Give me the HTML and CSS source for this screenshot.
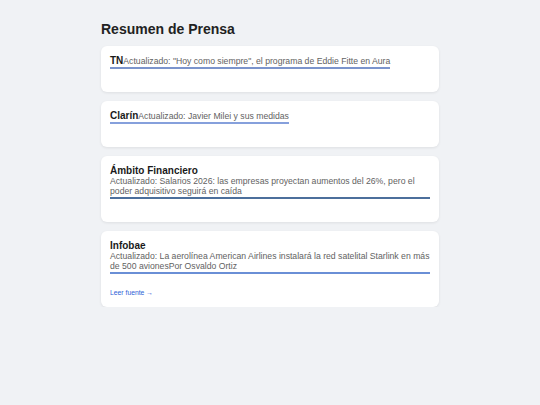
FILE: index.html
```html
<!DOCTYPE html>
<html lang="es">
<head>
<meta charset="utf-8">
<title>Resumen de Prensa</title>
<link rel="stylesheet" href="styles.css">
</head>
<body>
<main class="page">
  <h1 class="page-title">Resumen de Prensa</h1>
  <section class="news-list">
    <article class="card">
      <div class="headline headline--a">
        <h2 class="source">TN</h2>
        <p class="summary">Actualizado: "Hoy como siempre", el programa de Eddie Fitte en Aura</p>
      </div>
      <div class="card-footer"></div>
    </article>
    <article class="card">
      <div class="headline headline--b">
        <h2 class="source">Clarín</h2>
        <p class="summary">Actualizado: Javier Milei y sus medidas</p>
      </div>
      <div class="card-footer"></div>
    </article>
    <article class="card">
      <div class="headline headline--c">
        <h2 class="source">Ámbito Financiero</h2>
        <p class="summary">Actualizado: Salarios 2026: las empresas proyectan aumentos del 26%, pero el poder adquisitivo seguirá en caída</p>
      </div>
      <div class="card-footer"></div>
    </article>
    <article class="card">
      <div class="headline headline--d">
        <h2 class="source">Infobae</h2>
        <p class="summary">Actualizado: La aerolínea American Airlines instalará la red satelital Starlink en más de 500 avionesPor Osvaldo Ortiz</p>
      </div>
      <div class="card-footer">
        <a class="read-link" href="#">Leer fuente →</a>
      </div>
    </article>
  </section>
</main>
</body>
</html>
```

FILE: styles.css
```css
* { box-sizing: border-box; }

html, body {
  margin: 0;
  padding: 0;
  background: #f0f2f5;
  font-family: "Liberation Sans", Arial, sans-serif;
  color: #1c1c1c;
}

.page {
  width: 338px;
  margin: 0 auto;
  padding-top: 20px;
}

.page-title {
  margin: 0 0 8px 0;
  font-size: 14px;
  line-height: 18px;
  font-weight: bold;
  color: #222;
}

.news-list {
  display: flex;
  flex-direction: column;
  gap: 9px;
}

.card {
  background: #fff;
  border-radius: 6px;
  padding: 9px;
  box-shadow: 0 1px 3px rgba(0, 0, 0, 0.08);
  font-size: 8px;
  line-height: 10px;
}

.headline {
  display: flex;
  flex-wrap: wrap;
  align-items: baseline;
  width: fit-content;
  max-width: 100%;
  padding-bottom: 1px;
}

.headline--a { border-bottom: 2px solid #7b94cc; }
.headline--b { border-bottom: 2px solid #86a0dc; }
.headline--c { border-bottom: 2px solid #4c6f9c; }
.headline--d { border-bottom: 2px solid #6a8fd6; }

.source {
  margin: 0;
  font-size: 10px;
  line-height: 11px;
  font-weight: bold;
  color: #1a1a1a;
}

.summary {
  margin: 0;
  font-size: 8.67px;
  line-height: 10px;
  color: #626262;
}

.card-footer {
  margin-top: 14px;
}

.read-link {
  display: block;
  font-size: 6.8px;
  line-height: 10px;
  color: #2e62d6;
  text-decoration: none;
}
```
